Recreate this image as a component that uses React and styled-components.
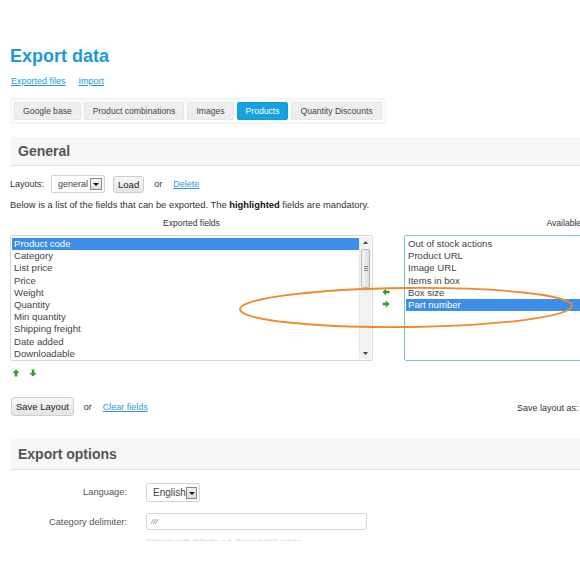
import React from 'react'
import styled, { createGlobalStyle } from 'styled-components'

const GlobalStyle = createGlobalStyle`
  html, body {
    margin: 0;
    padding: 0;
    background: #fff;
    overflow: hidden;
  }
  body {
    font-family: "Liberation Sans", Arial, sans-serif;
    color: #333;
  }
`

const exported = [
  'Product code',
  'Category',
  'List price',
  'Price',
  'Weight',
  'Quantity',
  'Min quantity',
  'Shipping freight',
  'Date added',
  'Downloadable'
]

const available = [
  'Out of stock actions',
  'Product URL',
  'Image URL',
  'Items in box',
  'Box size',
  'Part number'
]

const tabs = ['Google base', 'Product combinations', 'Images', 'Products', 'Quantity Discounts']

const App = () => {
  return (
    <Page>
      <GlobalStyle />
      <Title>Export data</Title>
      <TopLinks>
        <TextLink href='#'>Exported files</TextLink>
        <TextLink href='#'>Import</TextLink>
      </TopLinks>
      <TabBar>
        {tabs.map(t => (
          <Tab key={t} active={t === 'Products'}>{t}</Tab>
        ))}
      </TabBar>

      <SectionHead>General</SectionHead>

      <LayoutRow>
        <Label>Layouts:</Label>
        <Select width={54}>general<DropBtn /></Select>
        <Button>Load</Button>
        <Or>or</Or>
        <TextLink href='#'>Delete</TextLink>
      </LayoutRow>

      <Note>
        Below is a list of the fields that can be exported. The <b>highlighted</b> fields are mandatory.
      </Note>

      <Fields>
        <ListCol>
          <ListTitle>Exported fields</ListTitle>
          <ListBox>
            <Options>
              {exported.map((f, i) => (
                <Option key={f} selected={i === 0}>{f}</Option>
              ))}
            </Options>
            <Scrollbar>
              <ScrollArrow>
                <svg width='5' height='3' viewBox='0 0 5 3'><path d='M0 3 L2.5 0 L5 3 Z' fill='#444' /></svg>
              </ScrollArrow>
              <Thumb>
                <Grip /><Grip /><Grip />
              </Thumb>
              <ScrollTrack />
              <ScrollArrow>
                <svg width='5' height='3' viewBox='0 0 5 3'><path d='M0 0 L2.5 3 L5 0 Z' fill='#444' /></svg>
              </ScrollArrow>
            </Scrollbar>
          </ListBox>
          <MoveRow>
            <ArrowIcon dir='up' />
            <ArrowIcon dir='down' />
          </MoveRow>
        </ListCol>

        <Transfer>
          <ArrowIcon dir='left' />
          <ArrowIcon dir='right' />
        </Transfer>

        <ListCol>
          <ListTitle>Available fields</ListTitle>
          <ListBox focused>
            <Options>
              {available.map(f => (
                <Option key={f} selected={f === 'Part number'}>{f}</Option>
              ))}
            </Options>
          </ListBox>
        </ListCol>
      </Fields>

      <SaveRow>
        <SaveLeft>
          <Button tall>Save Layout</Button>
          <Or>or</Or>
          <TextLink href='#'>Clear fields</TextLink>
        </SaveLeft>
        <SaveRight>Save layout as:</SaveRight>
      </SaveRow>

      <SectionHead tall>Export options</SectionHead>

      <Form>
        <FormLabel>Language:</FormLabel>
        <div>
          <Select width={54} big>English<DropBtn /></Select>
        </div>
        <FormLabel>Category delimiter:</FormLabel>
        <div>
          <Input>///</Input>
          <Hint>Category path delimiter, e.g. Computers///Laptops</Hint>
        </div>
      </Form>

      <Annotation width='600' height='580' viewBox='0 0 600 580'>
        <ellipse cx='406' cy='307.5' rx='166' ry='19.5' transform='rotate(-0.6 406 307.5)'
          fill='none' stroke='#f0892a' strokeWidth='1.8' />
      </Annotation>
    </Page>
  )
}

const ArrowIcon = ({ dir }) => {
  const rot = { up: 0, right: 90, down: 180, left: 270 }[dir]
  return (
    <svg width='8' height='8' viewBox='0 0 8 8'>
      <path d='M4 0.5 L7.5 4 L5.3 4 L5.3 7.5 L2.7 7.5 L2.7 4 L0.5 4 Z'
        fill='#2e9b2e' transform={`rotate(${rot} 4 4)`} />
    </svg>
  )
}

export default App

const Page = styled.div`
position: relative;
width: 760px;
height: 580px;
padding: 45px 0 0 10px;
box-sizing: border-box;`

const Title = styled.h1`
margin: 0;
font-size: 18px;
font-weight: bold;
line-height: 22px;
color: #1c9ad6;`

const TopLinks = styled.div`
display: flex;
gap: 13px;
margin-top: 8px;
font-size: 9px;
line-height: 12px;
padding-left: 1px;`

const TextLink = styled.a`
color: #2d9ad3;
text-decoration: underline;
font-size: 9px;
white-space: nowrap;`

const TabBar = styled.div`
display: flex;
gap: 3px;
width: fit-content;
margin-top: 11px;
padding: 3px;
background: #fafafa;
border: 1px solid #f2f2f2;
border-radius: 2px;`

const Tab = styled.div`
flex-shrink: 0;
white-space: nowrap;
padding: 0 8px;
height: 16px;
line-height: 16px;
font-size: 8.6px;
border-radius: 2px;
color: ${p => (p.active ? '#fff' : '#444')};
background: ${p => (p.active ? '#17a1de' : '#eeeeee')};
border: 1px solid ${p => (p.active ? '#119ad6' : '#e6e6e6')};`

const SectionHead = styled.div`
margin-top: ${p => (p.tall ? '23px' : '13px')};
height: ${p => (p.tall ? '30px' : '28px')};
line-height: ${p => (p.tall ? '30px' : '28px')};
padding-left: 8px;
background: #f7f7f7;
border-bottom: 1px solid #e4e4e4;
font-size: 14px;
font-weight: bold;
color: #555;`

const LayoutRow = styled.div`
display: flex;
align-items: center;
margin-top: 8px;
height: 20px;
font-size: 9px;`

const Label = styled.span`
color: #333;
margin-right: 7px;`

const Select = styled.div`
display: flex;
align-items: center;
justify-content: space-between;
width: ${p => p.width}px;
height: ${p => (p.big ? '19px' : '18px')};
box-sizing: border-box;
padding: 0 2px 0 6px;
border: 1px solid #d4d4d4;
border-radius: 2px;
background: #fff;
font-size: ${p => (p.big ? '10px' : '9px')};
color: #444;`

const DropBtn = styled.span`
width: 10px;
height: 10px;
border: 1px solid #888;
background: linear-gradient(#f6f6f6, #ddd);
position: relative;
&:after {
  content: '';
  position: absolute;
  left: 2px;
  top: 4px;
  border-left: 3px solid transparent;
  border-right: 3px solid transparent;
  border-top: 3px solid #111;
}`

const Button = styled.button`
margin-left: ${p => (p.tall ? '1px' : '8px')};
height: ${p => (p.tall ? '19px' : '17px')};
padding: 0 4px;
border: 1px solid #cfcfcf;
border-radius: 3px;
background: linear-gradient(#f7f7f7, #e5e5e5);
font-family: "Liberation Sans", Arial, sans-serif;
font-size: 9.5px;
color: #222;
white-space: nowrap;`

const Or = styled.span`
margin: 0 11px 0 10px;
font-size: 9px;
color: #333;`

const Note = styled.div`
margin-top: 5px;
font-size: 9.4px;
line-height: 12px;
white-space: nowrap;
color: #333;
b { color: #111; }`

const Fields = styled.div`
display: flex;
margin-top: 6px;`

const ListCol = styled.div`
display: flex;
flex-direction: column;`

const ListTitle = styled.div`
text-align: center;
font-size: 8.6px;
line-height: 12px;
color: #333;
white-space: nowrap;`

const ListBox = styled.div`
display: flex;
width: ${p => (p.focused ? '342px' : '363px')};
height: 126px;
margin-top: 6px;
box-sizing: border-box;
border: 1px solid ${p => (p.focused ? '#7cc3cf' : '#d8d8d8')};
border-radius: 2px;
padding: 1px;
background: #fff;`

const Options = styled.div`
flex: 1;
padding-top: 1px;`

const Option = styled.div`
height: 12.2px;
line-height: 12.2px;
padding-left: 2px;
font-size: 9.6px;
color: ${p => (p.selected ? '#fff' : '#444')};
background: ${p => (p.selected ? '#3c8ee8' : 'transparent')};`

const Scrollbar = styled.div`
width: 11px;
display: flex;
flex-direction: column;
background: #f2f2f2;
border-left: 1px solid #e8e8e8;`

const ScrollArrow = styled.div`
height: 11px;
display: flex;
align-items: center;
justify-content: center;`

const Thumb = styled.div`
height: 37px;
margin: 1px 1px;
border: 1px solid #b8b8b8;
border-radius: 2px;
background: linear-gradient(90deg, #f4f4f4, #dcdcdc);
display: flex;
flex-direction: column;
justify-content: center;
align-items: center;
gap: 1px;`

const Grip = styled.span`
width: 4px;
height: 1px;
background: #888;`

const ScrollTrack = styled.div`
flex: 1;`

const MoveRow = styled.div`
display: flex;
gap: 9px;
margin-top: 8px;
padding-left: 2px;`

const Transfer = styled.div`
width: 31px;
display: flex;
flex-direction: column;
align-items: center;
gap: 4px;
padding-top: 71px;
padding-right: 5px;
box-sizing: border-box;`

const SaveRow = styled.div`
display: flex;
align-items: center;
margin-top: 20px;
height: 19px;`

const SaveLeft = styled.div`
display: flex;
align-items: center;
width: 507px;`

const SaveRight = styled.div`
font-size: 9px;
color: #333;
padding-top: 2px;
white-space: nowrap;`

const Form = styled.div`
display: grid;
grid-template-columns: 117px auto;
column-gap: 19px;
row-gap: 11px;
align-items: start;
margin-top: 13px;`

const FormLabel = styled.div`
text-align: right;
font-size: 9.3px;
line-height: 19px;
color: #555;`

const Input = styled.div`
width: 221px;
height: 17px;
box-sizing: border-box;
border: 1px solid #d6d6d6;
border-radius: 2px;
padding-left: 4px;
line-height: 15px;
font-size: 8px;
font-style: italic;
color: #777;`

const Hint = styled.div`
margin-top: 8px;
height: 3px;
overflow: hidden;
font-size: 7px;
line-height: 7px;
color: #c8c8c8;
white-space: nowrap;`

const Annotation = styled.svg`
position: absolute;
left: 0;
top: 0;
pointer-events: none;`
